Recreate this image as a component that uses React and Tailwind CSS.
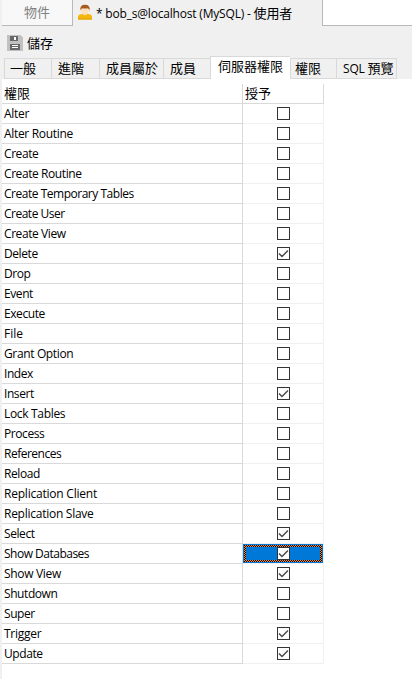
const PRIVILEGES = [
  'Alter', 'Alter Routine', 'Create', 'Create Routine', 'Create Temporary Tables', 'Create User',
  'Create View', 'Delete', 'Drop', 'Event', 'Execute', 'File', 'Grant Option', 'Index', 'Insert',
  'Lock Tables', 'Process', 'References', 'Reload', 'Replication Client', 'Replication Slave',
  'Select', 'Show Databases', 'Show View', 'Shutdown', 'Super', 'Trigger', 'Update',
];
const GRANTED = ['Delete', 'Insert', 'Select', 'Show Databases', 'Show View', 'Trigger', 'Update'];
const SELECTED = 'Show Databases';

const TRACKING = {
  'Alter': 'tracking-[-0.3px]',
  'File': 'tracking-normal',
  'Replication Client': 'tracking-[-0.22px]',
  'Replication Slave': 'tracking-[-0.26px]',
  'Trigger': 'tracking-[-0.28px]',
  'Alter Routine': 'tracking-[-0.32px]',
  'Grant Option': 'tracking-[-0.36px]',
  'Show View': 'tracking-[-0.32px]',
  'Create Temporary Tables': 'tracking-[-0.48px]',
  'Create User': 'tracking-[-0.5px]',
  'Lock Tables': 'tracking-[-0.32px]',
  'References': 'tracking-[-0.5px]',
  'Show Databases': 'tracking-[-0.5px]',
};

const TABS = [
  { label: '一般', size: 'w-[47px] pl-[5px]' },
  { label: '進階', size: 'w-[48px] pl-[6px]' },
  { label: '成員屬於', size: 'w-[64px] pl-[6px]' },
  { label: '成員', size: 'w-[47px] pl-[6px]' },
  { label: '伺服器權限', size: 'w-[80px] pl-[7px]', active: true },
  { label: '權限', size: 'w-[46px] pl-[4px]' },
  { label: 'SQL 預覽', size: 'w-[61px] pl-[6px] border-r', latin: true },
];

function UserIcon() {
  return (
    <svg className="block h-[16px] w-[16px] shrink-0" viewBox="0 0 16 16">
      <path d="M1 15.500V13q0-3 4-3h6q4 0 4 3v2.500z" fill="#f5b70c" />
      <path d="M1 14.500h14v1H1z" fill="#dba000" />
      <path d="M6 8h4v2.500q-2 1.500-4 0z" fill="#f5cfa5" />
      <ellipse cx="8" cy="6" rx="4.300" ry="4.700" fill="#fde0bd" />
      <path d="M3.400 6.500Q2.600 .7 8 .7t4.600 5.800q-.5-2-2.200-2.200-3 .5-4.800-.1Q4 4.500 3.400 6.500z" fill="#a85a1c" />
    </svg>
  );
}

function SaveIcon() {
  return (
    <svg className="block h-[16px] w-[16px] shrink-0" viewBox="0 0 16 16" shapeRendering="crispEdges">
      <path d="M0 0h14v1h1v1h1v14H0z" fill="#c1c1c1" />
      <path d="M3 1h8v5H3zM3 9h10v6H3z" fill="#686868" />
      <path d="M7 2h2v3H7zM5 10h6v1H5zM5 12h6v1H5z" fill="#fff" />
    </svg>
  );
}

function Checkbox({ checked }) {
  return (
    <span className="block h-[13px] w-[13px] border border-[#333] bg-white">
      {checked && (
        <svg className="block h-[11px] w-[11px]" viewBox="0 0 11 11">
          <path d="M1 5.500L4 8.500L10 2.500" fill="none" stroke="#4a4a4a" strokeWidth="1.500" />
        </svg>
      )}
    </span>
  );
}

// Dithered two-pixel focus outline laid over the selected cell.
function FocusRing() {
  return (
    <svg className="absolute left-px top-px h-[17px] w-[78px]" viewBox="0 0 78 17" shapeRendering="crispEdges">
      <defs>
        <pattern id="focus-dither" width="2" height="2" patternUnits="userSpaceOnUse">
          <rect width="2" height="2" fill="#ff8728" />
          <rect width="1" height="1" fill="#000" />
          <rect x="1" y="1" width="1" height="1" fill="#000" />
        </pattern>
      </defs>
      <path d="M0 0h78v17H0zM2 2v13h74V2z" fillRule="evenodd" fill="url(#focus-dither)" />
    </svg>
  );
}

function PrivilegeRow({ name }) {
  const selected = name === SELECTED;
  return (
    <div className="flex h-[20px]">
      <div className={`w-[241px] whitespace-nowrap border-b border-r border-[#d9d9d9] pl-[2px] leading-[19px] ${TRACKING[name] ?? 'tracking-[-0.42px]'}`}>
        {name}
      </div>
      <div className="w-[81px] border-b border-r border-[#f0f0f0]">
        <div className={`relative flex h-[19px] items-center justify-center pl-px ${selected ? 'bg-[#0078d7]' : ''}`}>
          <Checkbox checked={GRANTED.includes(name)} />
          {selected && <FocusRing />}
        </div>
      </div>
    </div>
  );
}

export default function App() {
  return (
    <div className="flex h-[679px] w-[412px] flex-col overflow-hidden bg-[#f0f0f0] pl-[2px] font-['Open_Sans','Noto_Sans_CJK_TC',sans-serif] text-[12px] text-black">
      <div className="flex h-[26px] shrink-0">
        <div className="w-[71px] border-b border-r border-[#b9b9b9] bg-[#f8f8f8] pl-[22px] text-[13px] leading-[25px] text-[#808080]">
          物件
        </div>
        <div className="flex w-[249px] items-start whitespace-nowrap pl-[4px] leading-[26px]">
          <div className="pt-[4px]"><UserIcon /></div>
          <span className="pl-[3px] tracking-[-0.19px]">* bob_s@localhost (MySQL) - <span className="text-[13px] tracking-[-0.2px]">使用者</span></span>
        </div>
        <div className="flex-1 border-b border-l border-[#b9b9b9] bg-white" />
      </div>

      <div className="flex h-[30px] shrink-0 pl-[5px] pt-[9px]">
        <SaveIcon />
        <span className="pl-[4px] text-[13px] leading-[17px]">儲存</span>
      </div>

      <div className="flex h-[23px] shrink-0 items-end pl-[2px]">
        {TABS.map((tab) => (
          <div
            key={tab.label}
            className={`shrink-0 whitespace-nowrap border-l border-t border-[#d9d9d9] text-[13px] ${tab.size} ${
              tab.active ? 'h-[23px] bg-white leading-[18px]' : 'h-[21px] border-b leading-[18px]'
            }`}
          >
            {tab.latin ? <><span className="text-[12px] tracking-[-0.2px]">SQL </span>預覽</> : tab.label}
          </div>
        ))}
      </div>

      <div className="flex-1 bg-white">
        <div className="flex h-[25px] text-[13px] leading-[19px]">
          <div className="h-[25px] w-[241px] border-b border-[#d9d9d9] pl-[2px] pt-[5px]">權限</div>
          <div className="-ml-px mt-[5px] h-[20px] w-[82px] border-x border-b border-[#d9d9d9] pl-[2px]">授予</div>
        </div>
        {PRIVILEGES.map((name) => <PrivilegeRow key={name} name={name} />)}
      </div>
    </div>
  );
}
